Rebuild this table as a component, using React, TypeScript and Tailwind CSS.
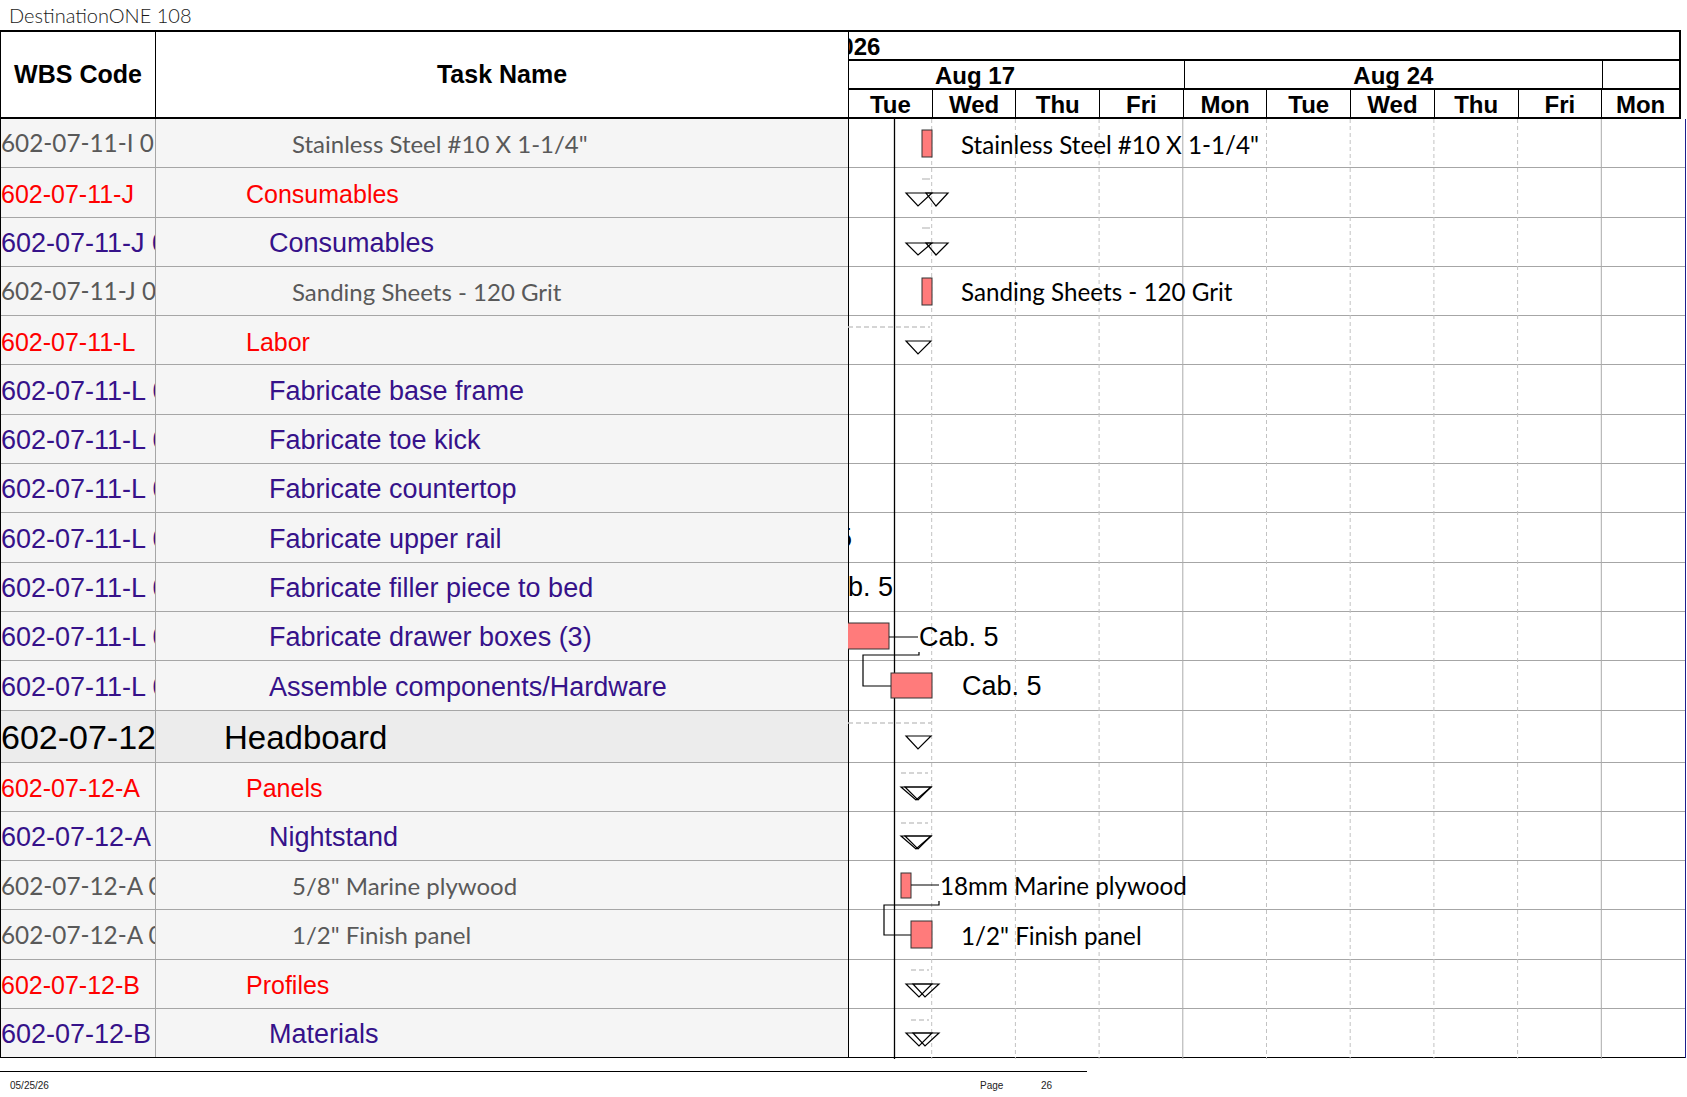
import React from "react";

type Lvl = 0 | 1 | 2 | 3;
type Row = { wbs: string; task: string; lvl: Lvl };

const rows: Row[] = [
  { wbs: "602-07-11-I 01-0034", task: 'Stainless Steel #10 X 1-1/4"', lvl: 3 },
  { wbs: "602-07-11-J", task: "Consumables", lvl: 1 },
  { wbs: "602-07-11-J 01", task: "Consumables", lvl: 2 },
  { wbs: "602-07-11-J 01-001", task: "Sanding Sheets - 120 Grit", lvl: 3 },
  { wbs: "602-07-11-L", task: "Labor", lvl: 1 },
  { wbs: "602-07-11-L 01", task: "Fabricate base frame", lvl: 2 },
  { wbs: "602-07-11-L 02", task: "Fabricate toe kick", lvl: 2 },
  { wbs: "602-07-11-L 03", task: "Fabricate countertop", lvl: 2 },
  { wbs: "602-07-11-L 04", task: "Fabricate upper rail", lvl: 2 },
  { wbs: "602-07-11-L 05", task: "Fabricate filler piece to bed", lvl: 2 },
  { wbs: "602-07-11-L 06", task: "Fabricate drawer boxes (3)", lvl: 2 },
  { wbs: "602-07-11-L 07", task: "Assemble components/Hardware", lvl: 2 },
  { wbs: "602-07-12", task: "Headboard", lvl: 0 },
  { wbs: "602-07-12-A", task: "Panels", lvl: 1 },
  { wbs: "602-07-12-A 01", task: "Nightstand", lvl: 2 },
  { wbs: "602-07-12-A 01-001", task: '5/8" Marine plywood', lvl: 3 },
  { wbs: "602-07-12-A 01-002", task: '1/2" Finish panel', lvl: 3 },
  { wbs: "602-07-12-B", task: "Profiles", lvl: 1 },
  { wbs: "602-07-12-B 01", task: "Materials", lvl: 2 },
];

const rowH: Record<Lvl, string> = {
  0: "h-[52px] bg-[#ececec]",
  1: "h-[49.3px] bg-[#f5f5f5]",
  2: "h-[49.3px] bg-[#f5f5f5]",
  3: "h-[49.3px] bg-[#f5f5f5]",
};

const wbsTxt: Record<Lvl, string> = {
  0: "text-[34px] text-black font-['Liberation_Sans',sans-serif] pt-[3px]",
  1: "text-[25px] text-[#ff0000] font-['Liberation_Sans',sans-serif] pt-[4px]",
  2: "text-[27px] text-[#36128a] font-['Liberation_Sans',sans-serif] pt-[3px]",
  3: "text-[24.3px] text-[#595959] font-['Lato',sans-serif] pt-[1px]",
};

const taskTxt: Record<Lvl, string> = {
  0: "text-[33px] text-black font-['Liberation_Sans',sans-serif] pt-[3px] pl-[68px]",
  1: "text-[25px] text-[#ff0000] font-['Liberation_Sans',sans-serif] pt-[4px] pl-[90px]",
  2: "text-[27px] text-[#36128a] font-['Liberation_Sans',sans-serif] pt-[3px] pl-[113px]",
  3: "text-[24px] text-[#595959] font-['Lato',sans-serif] pt-[1px] pl-[136px]",
};

const days = ["Tue", "Wed", "Thu", "Fri", "Mon", "Tue", "Wed", "Thu", "Fri"];

const T = ({ pts }: { pts: string }) => (
  <polygon points={pts} fill="none" stroke="#000" strokeWidth={1.2} />
);

function Chart() {
  const grid = [1, 2, 3, 4, 5, 6, 7, 8, 9];
  const bar = { fill: "#ff7b7b", stroke: "#333", strokeWidth: 1 };
  const mat = "font-['Lato',sans-serif] text-[24.2px]";
  const cab = "font-['Liberation_Sans',sans-serif] text-[27px]";
  return (
    <svg
      className="absolute left-[-1px] top-0"
      width={838}
      height={940}
      viewBox="0 0 838 940"
    >
      {grid.map((k) =>
        k === 4 || k === 9 ? (
          <line key={k} x1={83.7 * k} x2={83.7 * k} y1={0} y2={940} stroke="#ababab" strokeWidth={1} />
        ) : (
          <line
            key={k}
            x1={83.7 * k}
            x2={83.7 * k}
            y1={0}
            y2={940}
            stroke="#c2c2c2"
            strokeWidth={1}
            strokeDasharray="4 3"
          />
        )
      )}
      <line x1={46.5} x2={46.5} y1={0} y2={940} stroke="#000" strokeWidth={1.3} />

      {/* row 1 */}
      <rect x={74} y={11} width={10} height={27} {...bar} />
      <text x={113} y={25} dominantBaseline="central" className={mat} fill="#000">
        Stainless Steel #10 X 1-1/4"
      </text>

      {/* row 2 */}
      <line x1={74} x2={82} y1={60} y2={60} stroke="#c8c8c8" strokeWidth={1.5} />
      <T pts="58,74 84,74 70,87" />
      <T pts="78,74 100,74 88,87" />

      {/* row 3 */}
      <line x1={74} x2={82} y1={109} y2={109} stroke="#c8c8c8" strokeWidth={1.5} />
      <T pts="58,124 84,124 70,136" />
      <T pts="78,124 100,124 88,136" />

      {/* row 4 */}
      <rect x={74} y={159} width={10} height={27} {...bar} />
      <text x={113} y={172.5} dominantBaseline="central" className={mat} fill="#000">
        Sanding Sheets - 120 Grit
      </text>

      {/* row 5 */}
      <line x1={0} x2={82} y1={208} y2={208} stroke="#c8c8c8" strokeWidth={1.5} strokeDasharray="5 3" />
      <T pts="58,222 83,222 70,235" />

      {/* row 9, 10 */}
      <text x={4} y={419} textAnchor="end" dominantBaseline="central" className={cab} fill="#000">
        Cab. 5
      </text>
      <text x={45} y={468} textAnchor="end" dominantBaseline="central" className={cab} fill="#000">
        Cab. 5
      </text>

      {/* row 11 */}
      <rect x={-2} y={504} width={43} height={26} {...bar} />
      <path d="M41 518 H70 M71 533 V536 H15 V567 H43" fill="none" stroke="#000" strokeWidth={1.2} />
      <text x={71} y={518} dominantBaseline="central" className={cab} fill="#000">
        Cab. 5
      </text>

      {/* row 12 */}
      <rect x={43} y={554} width={41} height={25} {...bar} />
      <text x={114} y={567} dominantBaseline="central" className={cab} fill="#000">
        Cab. 5
      </text>

      {/* row 13 headboard */}
      <line x1={0} x2={83} y1={604} y2={604} stroke="#c8c8c8" strokeWidth={1.5} strokeDasharray="5 3" />
      <T pts="58,617 83,617 70,630" />

      {/* row 14 */}
      <line x1={53} x2={80} y1={654} y2={654} stroke="#c8c8c8" strokeWidth={1.5} strokeDasharray="5 3" />
      <T pts="53,668 83,668 68,681" />
      <T pts="57,668 83,668 70,681" />

      {/* row 15 */}
      <line x1={53} x2={80} y1={704} y2={704} stroke="#c8c8c8" strokeWidth={1.5} strokeDasharray="5 3" />
      <T pts="53,717 83,717 68,730" />
      <T pts="57,717 83,717 70,730" />

      {/* row 16 */}
      <rect x={53} y={754} width={10} height={25} {...bar} />
      <path d="M63 766 H91 M91 782 V786 H36 V816 H63" fill="none" stroke="#000" strokeWidth={1.2} />
      <text x={92} y={766} dominantBaseline="central" className={mat} fill="#000">
        18mm Marine plywood
      </text>

      {/* row 17 */}
      <rect x={63} y={802} width={21} height={27} {...bar} />
      <text x={113} y={816} dominantBaseline="central" className={mat} fill="#000">
        1/2" Finish panel
      </text>

      {/* row 18 */}
      <line x1={63} x2={81} y1={851} y2={851} stroke="#c8c8c8" strokeWidth={1.5} strokeDasharray="5 3" />
      <T pts="58,865 84,865 71,878" />
      <T pts="65,865 91,865 77,878" />

      {/* row 19 */}
      <line x1={63} x2={81} y1={901} y2={901} stroke="#c8c8c8" strokeWidth={1.5} strokeDasharray="5 3" />
      <T pts="58,914 84,914 71,927" />
      <T pts="65,914 91,914 77,927" />
    </svg>
  );
}

export default function App() {
  return (
    <div className="w-[1687px] h-[1097px] bg-white overflow-hidden relative">
      <div className="h-[30px] flex items-center pl-[9px] text-[20px] font-light text-[#1a1a1a] font-['Lato',sans-serif]">
        DestinationONE 108
      </div>

      <div className="flex">
        {/* Left table */}
        <div className="w-[848px] shrink-0 flex flex-col border-l border-black">
          <div className="h-[89px] shrink-0 flex border-t-2 border-b-2 border-black font-['Liberation_Sans',sans-serif] font-bold text-[25px] text-black">
            <div className="w-[155px] shrink-0 border-r border-black flex items-center justify-center pt-[1px]">
              WBS Code
            </div>
            <div className="flex-1 flex items-center justify-center pt-[1px]">Task Name</div>
          </div>
          {rows.map((r, i) => (
            <div
              key={i}
              className={`${rowH[r.lvl]} shrink-0 flex border-b ${
                i === rows.length - 1 ? "border-black" : "border-[#a6a6a6]"
              }`}
            >
              <div
                className={`w-[155px] shrink-0 border-r border-[#a6a6a6] overflow-hidden whitespace-nowrap flex items-center ${wbsTxt[r.lvl]}`}
              >
                {r.wbs}
              </div>
              <div
                className={`flex-1 overflow-hidden whitespace-nowrap flex items-center ${taskTxt[r.lvl]}`}
              >
                {r.task}
              </div>
            </div>
          ))}
        </div>

        {/* Gantt */}
        <div className="w-[838px] shrink-0 flex flex-col">
          <div className="w-[833px] h-[89px] shrink-0 flex flex-col border-t-2 border-b-2 border-l border-r-2 border-black font-['Liberation_Sans',sans-serif] font-bold text-[24px] leading-none text-black">
            <div className="h-[29px] shrink-0 border-b-2 border-black overflow-hidden flex items-center pt-[2px]">
              <span className="ml-[-22px]">2026</span>
            </div>
            <div className="h-[29px] shrink-0 border-b-2 border-black flex">
              <div className="w-[335.6px] shrink-0 border-r border-black overflow-hidden flex items-center pt-[3px]">
                <div className="ml-[-84px] w-[420px] shrink-0 text-center">Aug 17</div>
              </div>
              <div className="w-[418.5px] shrink-0 border-r border-black flex items-center justify-center pt-[3px]">
                Aug 24
              </div>
              <div className="flex-1" />
            </div>
            <div className="h-[27px] shrink-0 flex">
              {days.map((d, i) => (
                <div
                  key={i}
                  className="w-[83.7px] shrink-0 border-r border-black flex items-center justify-center pt-[3px]"
                >
                  {d}
                </div>
              ))}
              <div className="flex-1 flex items-center justify-center pt-[3px]">Mon</div>
            </div>
          </div>

          <div className="relative border-l border-black border-r border-r-[#1e1e8c]">
            {rows.map((r, i) => (
              <div
                key={i}
                className={`${r.lvl === 0 ? "h-[52px]" : "h-[49.3px]"} border-b ${
                  i === rows.length - 1 ? "border-black" : "border-[#a6a6a6]"
                }`}
              />
            ))}
            <Chart />
          </div>
        </div>
      </div>

      <div className="mt-[13px] w-[1087px] border-t border-black" />
      <div className="flex items-center pt-[6px] text-[10px] text-[#222] font-['Liberation_Sans',sans-serif]">
        <span className="ml-[10px] w-[970px] shrink-0">05/25/26</span>
        <span className="w-[61px] shrink-0">Page</span>
        <span>26</span>
      </div>
    </div>
  );
}
